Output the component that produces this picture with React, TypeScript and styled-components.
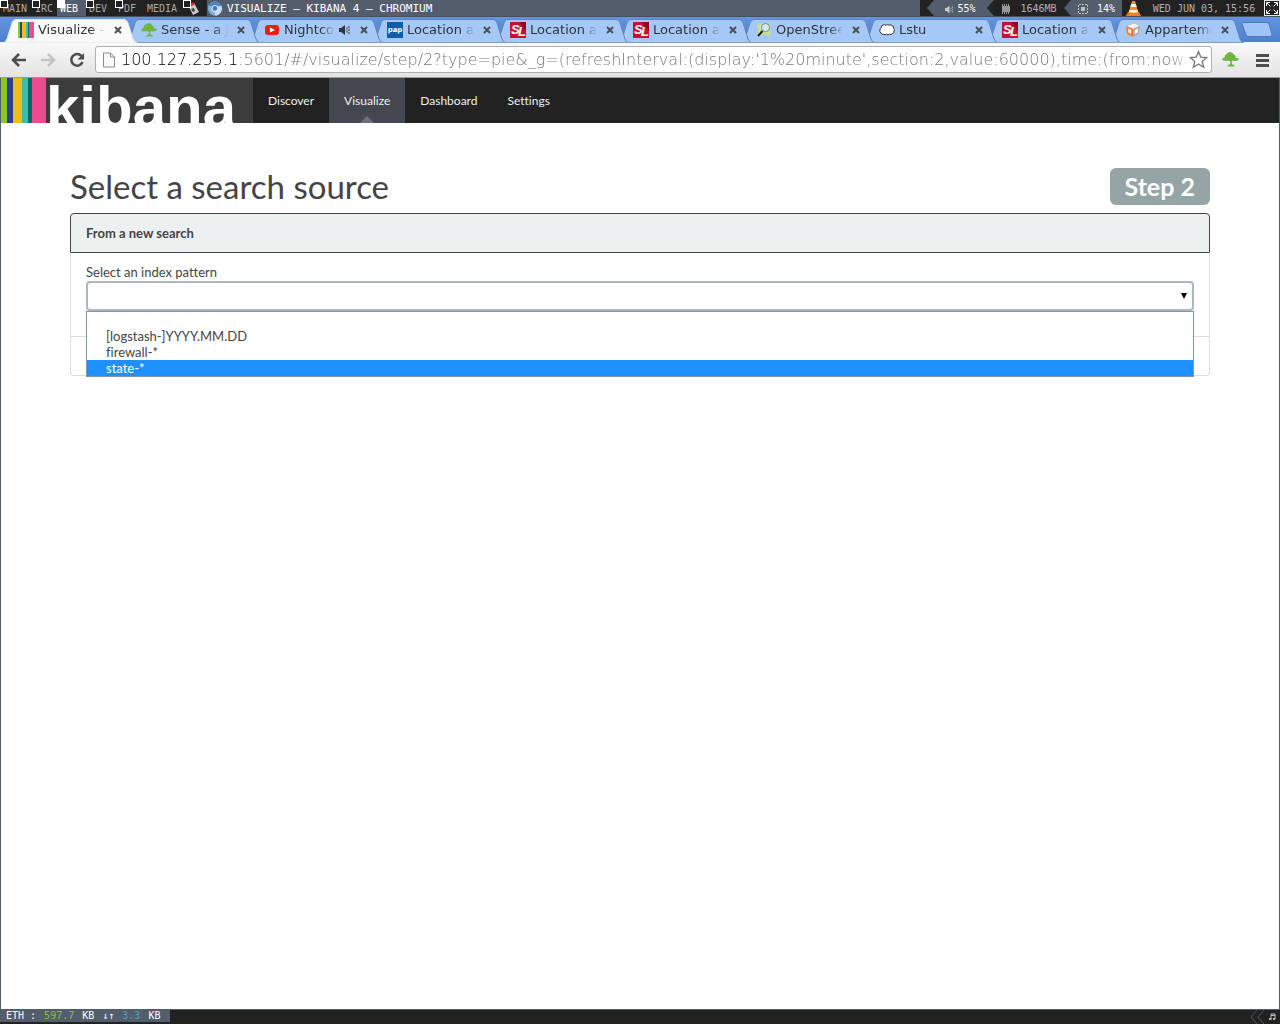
import React from "react";
import styled, { createGlobalStyle, css } from "styled-components";

const slate = "#545d6c";
const ink = "#222222";

const GlobalStyle = createGlobalStyle`
  *, *::before, *::after { box-sizing: border-box; }
  body { margin: 0; background: #fff; font-family: Lato, sans-serif; font-size: 13px; color: #444; font-variant-ligatures: no-common-ligatures; }
  button, input, select { font: inherit; color: inherit; margin: 0; padding: 0; border: 0; background: none; }
  svg { display: block; flex: none; }
`;

const Desktop = styled.div`
  display: flex;
  flex-direction: column;
  min-height: 100vh;
  overflow: hidden;
`;

/* ---------- window manager bar ---------- */

const WmBar = styled.header`
  display: flex;
  height: 16px;
  background: ${slate};
  color: #fff;
  font: 10px/16px "DejaVu Sans Mono", monospace;
  white-space: nowrap;
`;

const Workspaces = styled.nav`
  display: grid;
  grid-template-columns: 32px 25px 29px 29px 29px 39px 24px;
  background: ${ink};
`;

const Workspace = styled.button<{ $active?: boolean; $marked?: boolean }>`
  position: relative;
  display: flex;
  align-items: center;
  padding: 2px 0 0 3px;
  line-height: 14px;
  color: ${(p) => (p.$active ? "#fff" : "#a8a8a8")};
  background: ${(p) => (p.$active ? slate : ink)};
  ${(p) =>
    p.$marked &&
    css`
      &::before {
        content: "";
        position: absolute;
        left: 0;
        top: 0;
        width: 8px;
        height: 8px;
        border: 1px solid #fff;
        background: ${p.$active ? "#fff" : ink};
      }
    `}
`;

const WindowTitle = styled.div`
  flex: 1;
  display: flex;
  align-items: center;
  gap: 4px;
  min-width: 0;
  padding-top: 1px;
  font-size: 11px;
`;

const Meters = styled.div`
  display: flex;
  background: ${ink};
  padding-left: 7px;
`;

const Meter = styled.div<{ $raised?: boolean; $width: number }>`
  display: flex;
  align-items: center;
  justify-content: center;
  gap: 3px;
  width: ${(p) => p.$width}px;
  padding-top: 2px;
  color: ${(p) => (p.$raised ? "#fff" : "#b0b0b0")};
  background: ${(p) => (p.$raised ? slate : ink)};
`;

const Arrow = styled.span<{ $from: string; $to: string }>`
  width: 7px;
  background: ${(p) => p.$from};
  &::before {
    content: "";
    display: block;
    height: 16px;
    background: ${(p) => p.$to};
    clip-path: polygon(100% 0, 0 50%, 100% 100%);
  }
`;

/* ---------- browser chrome ---------- */

const TabStrip = styled.div`
  display: flex;
  height: 26px;
  padding: 2px 0 0 3px;
  border-top: 1px solid #47505f;
  background: linear-gradient(#6394de, #4f7fd0);
`;

const Tab = styled.div<{ $layer: number }>`
  position: relative;
  z-index: ${(p) => p.$layer};
  flex: 0 1 123px;
  min-width: 0;
  display: flex;
  align-items: center;
  gap: 4px;
  padding: 0 3px 1px 15px;
`;

const TabShape = styled.svg`
  position: absolute;
  left: 0;
  top: 0;
  z-index: -1;
  width: calc(100% + 11px);
  height: 24px;
`;

const TabLabel = styled.button`
  flex: 1;
  min-width: 0;
  overflow: hidden;
  text-align: left;
  white-space: nowrap;
  font: 13px/20px "DejaVu Sans", sans-serif;
  color: #303438;
  mask-image: linear-gradient(to right, #000 calc(100% - 14px), transparent);
`;

const TabClose = styled.button`
  display: flex;
  width: 10px;
  margin-left: 4px;
`;

const NewTab = styled.button`
  margin-left: 8px;
  height: 18px;
  padding-top: 3px;
`;

const Toolbar = styled.div`
  display: flex;
  align-items: center;
  gap: 12px;
  height: 36px;
  padding: 0 8px 0 11px;
  border-bottom: 1px solid #9a9a9a;
  background: linear-gradient(#f9f9f9, #e3e3e3);
`;

const NavButtons = styled.div`
  display: flex;
  gap: 13px;
`;

const IconButton = styled.button`
  display: flex;
`;

const AddressBar = styled.form`
  flex: 1;
  min-width: 0;
  display: flex;
  align-items: center;
  gap: 4px;
  height: 27px;
  padding: 0 3px 0 5px;
  margin: 0 -2px;
  border: 1px solid #b0b0b0;
  border-radius: 3px;
  background: #fff;
`;

const Address = styled.input`
  flex: 1;
  min-width: 0;
  height: 24px;
  font: 200 16px/24px "DejaVu Sans", sans-serif;
  color: transparent;
  outline: none;
  background: linear-gradient(
    to right,
    #000 117px,
    #707070 117px,
    #707070 calc(100% - 16px),
    #d0d0d0
  );
  background-clip: text;
  -webkit-background-clip: text;
`;

/* ---------- kibana ---------- */

const Page = styled.div`
  flex: 1;
  border: solid ${slate};
  border-width: 0 1px;
  background: #fff;
`;

const KibanaNav = styled.nav`
  display: flex;
  height: 45px;
  background: ${ink};
`;

const Brand = styled.a`
  display: flex;
  width: 252px;
  height: 45px;
  overflow: hidden;
  background: #3c3c3c;
  color: #fff;
  text-decoration: none;
`;

const Stripe = styled.span<{ $color: string; $width: number }>`
  flex: none;
  width: ${(p) => p.$width}px;
  background: ${(p) => p.$color};
`;

const Wordmark = styled.span`
  font: bold 60px/60px "Liberation Sans", Arial, sans-serif;
`;

const NavLink = styled.a<{ $active?: boolean }>`
  position: relative;
  padding: 0 15px;
  font-size: 12px;
  line-height: 45px;
  color: #ecf0f1;
  text-decoration: none;
  background: ${(p) => (p.$active ? "#434750" : "transparent")};
  ${(p) =>
    p.$active &&
    css`
      &::after {
        content: "";
        position: absolute;
        left: calc(50% - 7px);
        bottom: 0;
        border: solid transparent;
        border-width: 0 7px 7px;
        border-bottom-color: #6d6e7e;
      }
    `}
`;

const Container = styled.main`
  max-width: 1170px;
  margin: 0 auto;
  padding: 45px 15px;
`;

const TitleRow = styled.div`
  display: flex;
  justify-content: space-between;
  align-items: flex-start;
  margin-bottom: 8px;
`;

const Title = styled.h1`
  margin: 0;
  font-size: 33px;
  line-height: 37px;
  font-weight: 400;
`;

const StepBadge = styled.span`
  padding: 0 15px;
  border-radius: 6px;
  background: #95a5a6;
  color: #fff;
  font-size: 25px;
  line-height: 37px;
  font-weight: 700;
`;

const PanelHeading = styled.h2`
  margin: 0;
  padding: 0 15px;
  border: 1px solid #444;
  border-radius: 4px 4px 0 0;
  background: #ecf0f1;
  font-size: 13px;
  line-height: 38px;
  font-weight: 700;
`;

const PanelBody = styled.div`
  height: 84px;
  padding: 10px 15px;
  border: solid #ddd;
  border-width: 0 1px 1px;
`;

const PanelFooter = styled.div`
  height: 39px;
  border: solid #ddd;
  border-width: 0 1px 1px;
  border-radius: 0 0 4px 4px;
`;

const FieldLabel = styled.label`
  display: block;
  line-height: 18px;
`;

const SelectWrap = styled.div`
  position: relative;
  & > svg {
    position: absolute;
    right: 7px;
    top: 12px;
    pointer-events: none;
  }
`;

const Select = styled.select`
  appearance: none;
  display: block;
  width: 100%;
  height: 30px;
  padding: 0 15px;
  border: 2px solid #aeb6bc;
  border-radius: 4px;
  background: #fff;
  outline: none;
`;

const Options = styled.ul`
  position: absolute;
  z-index: 1;
  left: 0;
  right: 0;
  top: 30px;
  margin: 0;
  padding: 0;
  list-style: none;
  border: 1px solid #7b98b2;
  background: #fff;
`;

const Option = styled.li<{ $selected?: boolean }>`
  height: 16px;
  padding-left: 19px;
  line-height: 16px;
  color: ${(p) => (p.$selected ? "#fff" : "#444")};
  background: ${(p) => (p.$selected ? "#1e90ff" : "transparent")};
`;

/* ---------- bottom bar ---------- */

const BottomBar = styled.footer`
  display: flex;
  justify-content: space-between;
  align-items: flex-start;
  height: 15px;
  border-top: 1px solid ${slate};
  background: ${ink};
  font: 10px/12px "DejaVu Sans Mono", monospace;
`;

const Network = styled.div`
  display: flex;
  gap: 8px;
  width: 170px;
  padding-left: 6px;
  background: ${slate};
  color: #fff;
  white-space: nowrap;
`;

const Rate = styled.span<{ $color: string }>`
  color: ${(p) => p.$color};
`;

const Tray = styled.div`
  display: flex;
  align-items: center;
  gap: 3px;
  padding-right: 4px;
`;

/* ---------- drawings ---------- */

const Tree = ({ size = 16 }: { size?: number }) => (
  <svg width={size} height={size} viewBox="0 0 16 16">
    <path
      d="M4 3l2-1.500L8 1l2 1 1.500 1.500L13 5l-.5 1.500H15L16 8l-1.500 1L12 9.500 10 9l-1 1.500.5 2L11 13l1 1.500H5L6 13l1.500-.5L8 10.500 6.500 9 4 9.500 1 9 0 7.500 1 6.500l1.500-.5V4.500z"
      fill="#6fb53f"
    />
  </svg>
);

const favicons: Record<string, React.ReactNode> = {
  kibana: (
    <svg width="16" height="16" viewBox="0 0 16 16">
      <path fill="#8ac926" d="M0 0h2v16H0z" />
      <path fill="#2c3e8f" d="M2 0h2v16H2z" />
      <path fill="#f3bd19" d="M4 0h4v16H4z" />
      <path fill="#3bbeb1" d="M8 0h2v16H8z" />
      <path fill="#046a5e" d="M10 0h1v16h-1z" />
      <path fill="#ee4a8f" d="M11 0h5v16h-5z" />
    </svg>
  ),
  tree: <Tree />,
  youtube: (
    <svg width="16" height="16" viewBox="0 0 16 16">
      <rect x="1" y="3" width="14" height="10" rx="3" fill="#e62117" />
      <path d="M6 5.500l5 2.500-5 2.500z" fill="#fff" />
    </svg>
  ),
  pap: (
    <svg width="16" height="16" viewBox="0 0 16 16">
      <rect width="16" height="16" fill="#0f5ca8" />
      <text x="8" y="10" textAnchor="middle" fontFamily="DejaVu Sans" fontWeight="700" fontSize="7" fill="#fff">
        pap
      </text>
    </svg>
  ),
  sl: (
    <svg width="16" height="16" viewBox="0 0 16 16">
      <rect width="16" height="16" fill="#c8102e" />
      <path d="M9 0h7v9z" fill="#8d0b20" />
      <text x="1 8" y="12 14" fontFamily="Liberation Sans" fontWeight="700" fontStyle="italic" fontSize="13" fill="#fff">
        SL
      </text>
    </svg>
  ),
  osm: (
    <svg width="16" height="16" viewBox="0 0 16 16">
      <path d="M1 1l5 1 4-1 5 1-1 5 1 7-5 0-4 0-5 0 1-6z" fill="#b9dd98" />
      <path d="M2 4l12 8M5 2l-2 11" stroke="#e8e4a0" />
      <circle cx="9.500" cy="5.500" r="4" fill="#d5e9ee" stroke="#7d8d8d" />
      <path d="M6.500 9L2 14" stroke="#222" strokeWidth="2" />
    </svg>
  ),
  cloud: (
    <svg width="16" height="16" viewBox="0 0 16 16">
      <path
        d="M2.500 5.500Q2 3.500 4 3.200 5.500 2 7 3.200 8.500 2 10 3.200 12 2 13 3.800 15 4 14.500 6 16 7.500 15 9 15.500 11 13.500 11.500 12 13.200 10.500 12.200 9 13.400 7.500 12.300 6 13.300 4.500 12.200 2.500 12.800 2 11 .2 10 1 8 .5 6.500 2.500 5.500z"
        fill="#fff"
        stroke="#333"
      />
    </svg>
  ),
  box: (
    <svg width="16" height="16" viewBox="0 0 16 16">
      <path d="M1 4l8-3 6 3-7 3z" fill="#f4f0ea" stroke="#a9a39c" strokeWidth=".5" />
      <path d="M1 4l7 3v8l-6-3z" fill="#f47a2c" />
      <path d="M15 4l-1 8-6 3V7z" fill="#b5aca4" />
      <path d="M3 6.500l3 1.300v4L3.500 10.500zM10 8l3-1.500-.5 4L10 12z" fill="#fff" />
    </svg>
  ),
};

const Speaker = ({ color, size = 12 }: { color: string; size?: number }) => (
  <svg width={size} height={size} viewBox="0 0 12 12">
    <path d="M0 4h2l4-3v10L2 8H0z" fill={color} />
    <path d="M8 3.500v5M10 2v8" stroke={color} fill="none" strokeDasharray="2 1" />
  </svg>
);

const Chip = ({ hollow }: { hollow?: boolean }) => (
  <svg width="10" height="10" viewBox="0 0 10 10">
    {hollow ? (
      <>
        <path d="M.5 1v8M9.500 1v8M1 .5h8M1 9.500h8" stroke="#c0c0c0" strokeDasharray="2 1" />
        <rect x="3" y="3" width="4" height="4" fill="#c0c0c0" />
      </>
    ) : (
      <>
        <path d="M1 1h8M1 9h8" stroke="#999" strokeWidth="2" strokeDasharray="1 1" />
        <rect x="1" y="2" width="8" height="6" fill="#999" />
      </>
    )}
  </svg>
);

const ChromiumIcon = () => (
  <svg width="16" height="15" viewBox="0 0 16 16">
    <circle cx="8" cy="8" r="7.500" fill="#7fb0e0" />
    <path d="M8 8L1.500 4.300A7.500 7.500 0 0 1 15 5H8z" fill="#4b83c3" />
    <path d="M8 8l6.900-3A7.500 7.500 0 0 1 8 15.500z" fill="#c5dcf2" />
    <circle cx="8" cy="8" r="3.500" fill="#fff" />
    <circle cx="8" cy="8" r="2.600" fill="#3d78bd" />
  </svg>
);

const Cone = () => (
  <svg width="15" height="16" viewBox="0 0 15 16">
    <path d="M2 11h11l2 4H0z" fill="#f08010" />
    <path d="M6 0h3l3.500 12q-5 2-10 0z" fill="#f58a1a" />
    <path d="M5.200 3h4.600l.9 3H4.300zM3.400 9h8.200l.6 2q-4.700 1.500-9.400 0z" fill="#f1f1f1" />
  </svg>
);

const tabs = [
  { icon: "kibana", label: "Visualize -" },
  { icon: "tree", label: "Sense - a J" },
  { icon: "youtube", label: "Nightcor", audio: true },
  { icon: "pap", label: "Location ap" },
  { icon: "sl", label: "Location ap" },
  { icon: "sl", label: "Location a" },
  { icon: "osm", label: "OpenStree" },
  { icon: "cloud", label: "Lstu" },
  { icon: "sl", label: "Location ap" },
  { icon: "box", label: "Apparteme" },
];

const stripes: [string, number][] = [
  ["#8ac81e", 6],
  ["#2d4090", 6],
  ["#f3bd19", 9],
  ["#3bbeb1", 6],
  ["#046a5e", 4],
  ["#ee4a8f", 14],
];

const patterns = ["", "[logstash-]YYYY.MM.DD", "firewall-*", "state-*"];

export default function App() {
  return (
    <Desktop>
      <GlobalStyle />
      <WmBar>
        <Workspaces aria-label="Workspaces">
          <Workspace $marked>MAIN</Workspace>
          <Workspace $marked>IRC</Workspace>
          <Workspace $marked $active>WEB</Workspace>
          <Workspace $marked>DEV</Workspace>
          <Workspace $marked>PDF</Workspace>
          <Workspace>MEDIA</Workspace>
          <Workspace $marked aria-label="Tools">
            <svg width="14" height="14" viewBox="0 0 14 14">
              <path d="M2 3l6-2 5 9-6 3z" fill="#c9c9c9" />
              <path d="M2 3l4-3 3 2-3 2z" fill="#d22" />
              <path d="M5 7l3-1 1 3-2 1z" fill="#444" />
            </svg>
          </Workspace>
        </Workspaces>
        <WindowTitle>
          <ChromiumIcon />
          VISUALIZE – KIBANA 4 – CHROMIUM
        </WindowTitle>
        <Meters>
          <Arrow $from={ink} $to={slate} />
          <Meter $raised $width={53}>
            <Speaker color="#c8c8c8" size={9} />
            55%
          </Meter>
          <Arrow $from={slate} $to={ink} />
          <Meter $width={70}>
            <Chip />
            <span>&nbsp;1646MB</span>
          </Meter>
          <Arrow $from={ink} $to={slate} />
          <Meter $raised $width={51}>
            <Chip hollow />
            <span>&nbsp;14%</span>
          </Meter>
          <Meter $width={22}>
            <Cone />
          </Meter>
          <Meter $width={120}>WED JUN 03, 15:56</Meter>
          <svg width="16" height="16" viewBox="0 0 16 16">
            <rect width="16" height="16" fill="#e8e8e8" />
            <rect x="1" y="1" width="14" height="14" fill="#222" />
            <path
              d="M2.500 6V2.500H6M10 2.500h3.500V6M2.500 10v3.500H6M10 13.500h3.500V10M3 3l3.500 3.500M13 3L9.500 6.500M3 13l3.500-3.500M13 13L9.500 9.500"
              stroke="#fff"
              fill="none"
            />
          </svg>
        </Meters>
      </WmBar>

      <TabStrip>
        {tabs.map((tab, i) => (
          <Tab key={i} $layer={tabs.length - i}>
            <TabShape viewBox="0 0 134 24" preserveAspectRatio="none">
              <path
                d="M0 24Q3 23 4 20L9 4Q10 .5 13 .5H121Q124 .5 125 4L130 20Q131 23 134 24z"
                fill={i === 0 ? "#f9f9f9" : "#a5c8f7"}
                stroke={i === 0 ? "#dfe6ef" : "#6587b5"}
              />
              {i > 0 && <path d="M0 23.500H134" stroke="#7f9cc4" />}
            </TabShape>
            {favicons[tab.icon]}
            <TabLabel>{tab.label}</TabLabel>
            {tab.audio && <Speaker color="#333" />}
            <TabClose aria-label="Close tab">
              <svg width="10" height="10" viewBox="0 0 10 10">
                <path d="M2 2l6 6M8 2L2 8" stroke="#4a4f55" strokeWidth="2" />
              </svg>
            </TabClose>
          </Tab>
        ))}
        <NewTab aria-label="New tab">
          <svg width="32" height="15" viewBox="0 0 32 15">
            <path d="M1 1.500Q1 .5 3 .5H25Q27 .5 28 2L31 12Q31.500 14.500 29 14.500H8Q6 14.500 5 13z" fill="#a0c3f5" stroke="#4f78b8" />
          </svg>
        </NewTab>
      </TabStrip>

      <Toolbar>
        <NavButtons>
          <IconButton aria-label="Back">
            <svg width="16" height="16" viewBox="0 0 16 16">
              <path d="M15 8H2M8 2L2 8l6 6" stroke="#4d4d4d" strokeWidth="2.500" fill="none" />
            </svg>
          </IconButton>
          <IconButton aria-label="Forward">
            <svg width="16" height="16" viewBox="0 0 16 16">
              <path d="M1 8h13M8 2l6 6-6 6" stroke="#c4c4c4" strokeWidth="2.500" fill="none" />
            </svg>
          </IconButton>
          <IconButton aria-label="Reload">
            <svg width="16" height="16" viewBox="0 0 16 16">
              <path d="M12.500 4A5.800 5.800 0 1 0 13.500 10" stroke="#4d4d4d" strokeWidth="2.500" fill="none" />
              <path d="M15 1v6.500H8.500z" fill="#4d4d4d" />
            </svg>
          </IconButton>
        </NavButtons>
        <AddressBar>
          <svg width="16" height="16" viewBox="0 0 16 16">
            <path d="M2.500 1h7l4 4v10h-11zM9.500 1v4h4" fill="#fafafa" stroke="#8c8c8c" />
          </svg>
          <Address
            aria-label="Address"
            defaultValue="100.127.255.1:5601/#/visualize/step/2?type=pie&_g=(refreshInterval:(display:'1%20minute',section:2,value:60000),time:(from:now-7d,m"
          />
          <IconButton type="button" aria-label="Bookmark this page">
            <svg width="19" height="19" viewBox="0 0 19 19">
              <path d="M9.500 1.500l2.300 5.600 6 .4-4.600 3.900 1.500 5.900-5.200-3.300-5.200 3.300 1.500-5.900L1.200 7.500l6-.4z" fill="#fff" stroke="#777" strokeWidth="1.300" />
            </svg>
          </IconButton>
        </AddressBar>
        <IconButton aria-label="Sense">
          <Tree size={17} />
        </IconButton>
        <IconButton aria-label="Menu">
          <svg width="21" height="14" viewBox="0 0 21 14">
            <path d="M5 2.500h13M5 7.500h13M5 12.500h13" stroke="#4d4d4d" strokeWidth="3" />
          </svg>
        </IconButton>
      </Toolbar>

      <Page>
        <KibanaNav>
          <Brand href="#/">
            {stripes.map(([color, width]) => (
              <Stripe key={color} $color={color} $width={width} />
            ))}
            <Wordmark>kibana</Wordmark>
          </Brand>
          <NavLink href="#/discover">Discover</NavLink>
          <NavLink href="#/visualize" $active>Visualize</NavLink>
          <NavLink href="#/dashboard">Dashboard</NavLink>
          <NavLink href="#/settings">Settings</NavLink>
        </KibanaNav>

        <Container>
          <TitleRow>
            <Title>Select a search source</Title>
            <StepBadge>Step 2</StepBadge>
          </TitleRow>
          <PanelHeading>From a new search</PanelHeading>
          <PanelBody>
            <FieldLabel htmlFor="pattern">Select an index pattern</FieldLabel>
            <SelectWrap>
              <Select id="pattern" defaultValue="">
                {patterns.map((p) => (
                  <option key={p} value={p}>{p}</option>
                ))}
              </Select>
              <svg width="6" height="6" viewBox="0 0 6 6">
                <path d="M0 0h6L3 6z" fill="#000" />
              </svg>
              <Options role="listbox" aria-label="Index patterns">
                {patterns.map((p) => (
                  <Option key={p} role="option" aria-selected={p === "state-*"} $selected={p === "state-*"}>
                    {p}
                  </Option>
                ))}
              </Options>
            </SelectWrap>
          </PanelBody>
          <PanelFooter />
        </Container>
      </Page>

      <BottomBar>
        <Network>
          <span>ETH :</span>
          <Rate $color="#86c232">597.7</Rate>
          <span>KB</span>
          <span>↓↑</span>
          <Rate $color="#45a5c4">3.3</Rate>
          <span>KB</span>
        </Network>
        <Tray>
          <svg width="16" height="14" viewBox="0 0 16 14">
            <path d="M7 0L1 7l6 7M14 0L8 7l6 7" stroke="#555" fill="none" />
          </svg>
          <svg width="7" height="8" viewBox="0 0 7 8">
            <path d="M2 7V1h4v5M2 2.500h4" stroke="#bbb" fill="none" />
            <path d="M0 5h2v2H0zM4 5h2v2H4z" fill="#bbb" />
          </svg>
        </Tray>
      </BottomBar>
    </Desktop>
  );
}
